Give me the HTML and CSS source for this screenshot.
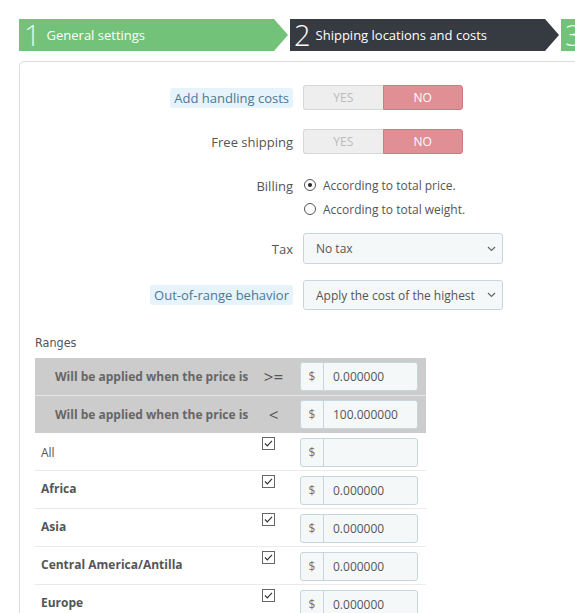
FILE: index.html
```html
<!DOCTYPE html>
<html>
<head>
<meta charset="utf-8">
<link rel="stylesheet" href="styles.css">
</head>
<body>
<div class="wizard">
  <div class="step step-done"><span class="num num-light">1</span><span class="step-text">General settings</span></div>
  <div class="step step-current"><span class="num">2</span><span class="step-text">Shipping locations and costs</span></div>
  <div class="step step-next"><span class="num num-light">3</span></div>
</div>

<div class="panel">
  <div class="form-group row-toggle1">
    <div class="label-col"><span class="label-tip">Add handling costs</span></div>
    <div class="control-col">
      <div class="switch"><span class="sw-yes">YES</span><span class="sw-no">NO</span></div>
    </div>
  </div>
  <div class="form-group row-toggle2">
    <div class="label-col"><span class="label-plain">Free shipping</span></div>
    <div class="control-col">
      <div class="switch"><span class="sw-yes">YES</span><span class="sw-no">NO</span></div>
    </div>
  </div>
  <div class="form-group form-top row-billing">
    <div class="label-col"><span class="label-plain billing-label">Billing</span></div>
    <div class="control-col radios">
      <div class="radio"><span class="radio-dot checked"></span><span>According to total price.</span></div>
      <div class="radio"><span class="radio-dot"></span><span>According to total weight.</span></div>
    </div>
  </div>
  <div class="form-group row-tax">
    <div class="label-col"><span class="label-plain">Tax</span></div>
    <div class="control-col">
      <div class="select select-tax"><span>No tax</span>
        <svg class="chev" width="9" height="6" viewBox="0 0 9 6"><path d="M1 1 L4.5 4.5 L8 1" fill="none" stroke="#666" stroke-width="1.2"/></svg>
      </div>
    </div>
  </div>
  <div class="form-group row-range">
    <div class="label-col"><span class="label-tip">Out-of-range behavior</span></div>
    <div class="control-col">
      <div class="select select-range"><span>Apply the cost of the highest</span>
        <svg class="chev" width="9" height="6" viewBox="0 0 9 6"><path d="M1 1 L4.5 4.5 L8 1" fill="none" stroke="#666" stroke-width="1.2"/></svg>
      </div>
    </div>
  </div>

  <div class="ranges-title">Ranges</div>
  <div class="ranges">
    <div class="rrow rhead rhead1">
      <div class="c1 hlabel">Will be applied when the price is</div>
      <div class="c2 op">&gt;=</div>
      <div class="c3"><div class="igroup"><span class="addon">$</span><span class="ival">0.000000</span></div></div>
    </div>
    <div class="rrow rhead">
      <div class="c1 hlabel">Will be applied when the price is</div>
      <div class="c2 op">&lt;</div>
      <div class="c3"><div class="igroup"><span class="addon">$</span><span class="ival">100.000000</span></div></div>
    </div>
    <div class="rrow rbody">
      <div class="c1 zone zone-all">All</div>
      <div class="c2 chk"><svg width="13" height="13" viewBox="0 0 13 13"><rect x="0.5" y="0.5" width="12" height="12" fill="#fff" stroke="#666"/><path d="M3 6.5 L5.3 8.8 L10 3.8" fill="none" stroke="#333" stroke-width="1.2"/></svg></div>
      <div class="c3"><div class="igroup"><span class="addon">$</span><span class="ival"></span></div></div>
    </div>
    <div class="rrow rbody">
      <div class="c1 zone">Africa</div>
      <div class="c2 chk"><svg width="13" height="13" viewBox="0 0 13 13"><rect x="0.5" y="0.5" width="12" height="12" fill="#fff" stroke="#666"/><path d="M3 6.5 L5.3 8.8 L10 3.8" fill="none" stroke="#333" stroke-width="1.2"/></svg></div>
      <div class="c3"><div class="igroup"><span class="addon">$</span><span class="ival">0.000000</span></div></div>
    </div>
    <div class="rrow rbody">
      <div class="c1 zone">Asia</div>
      <div class="c2 chk"><svg width="13" height="13" viewBox="0 0 13 13"><rect x="0.5" y="0.5" width="12" height="12" fill="#fff" stroke="#666"/><path d="M3 6.5 L5.3 8.8 L10 3.8" fill="none" stroke="#333" stroke-width="1.2"/></svg></div>
      <div class="c3"><div class="igroup"><span class="addon">$</span><span class="ival">0.000000</span></div></div>
    </div>
    <div class="rrow rbody">
      <div class="c1 zone">Central America/Antilla</div>
      <div class="c2 chk"><svg width="13" height="13" viewBox="0 0 13 13"><rect x="0.5" y="0.5" width="12" height="12" fill="#fff" stroke="#666"/><path d="M3 6.5 L5.3 8.8 L10 3.8" fill="none" stroke="#333" stroke-width="1.2"/></svg></div>
      <div class="c3"><div class="igroup"><span class="addon">$</span><span class="ival">0.000000</span></div></div>
    </div>
    <div class="rrow rbody">
      <div class="c1 zone">Europe</div>
      <div class="c2 chk"><svg width="13" height="13" viewBox="0 0 13 13"><rect x="0.5" y="0.5" width="12" height="12" fill="#fff" stroke="#666"/><path d="M3 6.5 L5.3 8.8 L10 3.8" fill="none" stroke="#333" stroke-width="1.2"/></svg></div>
      <div class="c3"><div class="igroup"><span class="addon">$</span><span class="ival">0.000000</span></div></div>
    </div>
  </div>
</div>
</body>
</html>
```
FILE: styles.css
```css
html, body {
  margin: 0;
  padding: 0;
  overflow: hidden;
  background: #fff;
}
body {
  font-family: "Open Sans", "Liberation Sans", sans-serif;
  font-size: 13px;
  color: #555;
}

/* wizard */
.wizard {
  display: flex;
  margin: 19px 0 0 19px;
  height: 32px;
}
.step {
  display: flex;
  align-items: center;
  height: 32px;
  color: #fff;
  flex: none;
  box-sizing: border-box;
  clip-path: polygon(0 0, calc(100% - 14px) 0, 100% 50%, calc(100% - 14px) 100%, 0 100%);
}
.step-done {
  width: 269px;
  background: #72c279;
  padding-left: 5px;
}
.step-current {
  width: 269px;
  margin-left: 2px;
  background: #363a41;
  padding-left: 4px;
}
.step-next {
  width: 60px;
  margin-left: 2px;
  background: #72c279;
  padding-left: 4px;
}
.num {
  font-size: 29px;
  font-weight: 300;
  line-height: 32px;
  margin-right: 5px;
  color: #fff;
}
.num-light {
  color: #e7f6e8;
  margin-right: 6px;
}
.step-text {
  font-size: 13px;
}

/* panel */
.panel {
  margin: 10px 0 0 19px;
  width: 600px;
  border: 1px solid #dcdcdc;
  border-radius: 5px 0 0 0;
  padding: 23px 0 0 0;
  box-sizing: border-box;
  min-height: 700px;
}
.form-group {
  display: grid;
  grid-template-columns: 273px 1fr;
  column-gap: 10px;
  align-items: center;
}
.form-top { align-items: start; }
.row-toggle2 { margin-top: 19px; }
.row-billing { margin-top: 23px; }
.row-tax { margin-top: 16px; }
.row-range { margin-top: 16px; }

.label-col {
  text-align: right;
}
.label-tip {
  display: inline-block;
  background: #e6f3fb;
  color: #4d7892;
  padding: 0 4px;
  line-height: 20px;
  border-radius: 3px;
}
.label-plain {
  display: inline-block;
  line-height: 20px;
}
.billing-label {
  line-height: 16px;
}

/* switch */
.switch {
  display: flex;
  width: 160px;
  height: 25px;
  font-size: 12px;
}
.switch span {
  flex: 1;
  display: flex;
  align-items: center;
  justify-content: center;
  box-sizing: border-box;
}
.sw-yes {
  background: #eeeeee;
  color: #bbbbbb;
  border: 1px solid #d6d6d6;
  border-right: none;
  border-radius: 3px 0 0 3px;
}
.sw-no {
  background: #e08f95;
  color: #fff;
  border: 1px solid #cf7a80;
  border-radius: 0 3px 3px 0;
}

/* radios */
.radios {
  display: flex;
  flex-direction: column;
  gap: 8px;
  font-size: 12px;
}
.radio {
  display: flex;
  align-items: center;
  height: 16px;
}
.radio-dot {
  width: 12px;
  height: 12px;
  border: 1px solid #555;
  border-radius: 50%;
  box-sizing: border-box;
  margin: 0 7px 0 1px;
  position: relative;
}
.radio-dot.checked::after {
  content: "";
  position: absolute;
  left: 3px;
  top: 3px;
  width: 4px;
  height: 4px;
  border-radius: 50%;
  background: #222;
}

/* select */
.select {
  display: flex;
  align-items: center;
  justify-content: space-between;
  width: 200px;
  box-sizing: border-box;
  background: #f5f8f9;
  border: 1px solid #c7d6db;
  border-radius: 3px;
  padding: 0 6px 0 12px;
  font-size: 12px;
  color: #555;
}
.select-tax { height: 31px; }
.select-range { height: 30px; }

/* ranges */
.ranges-title {
  font-family: "DejaVu Sans Condensed", "DejaVu Sans", sans-serif;
  font-stretch: condensed;
  font-size: 12.5px;
  color: #555;
  margin: 25px 0 0 15px;
  line-height: 16px;
}
.ranges {
  margin: 7px 0 0 15px;
  width: 391px;
}
.rrow {
  display: grid;
  grid-template-columns: 220px 37px 134px;
}
.rhead {
  background: #cccccc;
  height: 37px;
  align-items: center;
}
.rhead1 {
  border-bottom: 1px solid #e6e6e6;
}
.hlabel {
  padding-left: 20px;
  font-weight: bold;
  font-size: 12px;
  color: #666;
}
.op {
  text-align: center;
  font-size: 17px;
  color: #555;
}
.c3 {
  padding-left: 8px;
}
.igroup {
  display: flex;
  width: 118px;
  height: 29px;
  box-sizing: border-box;
  background: #f5f8f9;
  border: 1px solid #c7d6db;
  border-radius: 3px;
  font-size: 12px;
}
.addon {
  width: 23px;
  flex: none;
  display: flex;
  align-items: center;
  justify-content: center;
  border-right: 1px solid #c7d6db;
  color: #8a6d45;
  box-sizing: border-box;
}
.ival {
  display: flex;
  align-items: center;
  padding-left: 9px;
  color: #555;
}
.rbody {
  height: 38px;
  border-bottom: 1px solid #eaeaea;
  box-sizing: border-box;
}
.rbody .c3 {
  padding-top: 5px;
}
.zone {
  padding-left: 6px;
  font-weight: bold;
  font-size: 12px;
  color: #555;
  align-self: center;
  margin-top: -3px;
}
.zone-all {
  font-weight: normal;
  margin-top: 2px;
}
.chk {
  padding: 4px 0 0 7px;
  line-height: 0;
}
```
